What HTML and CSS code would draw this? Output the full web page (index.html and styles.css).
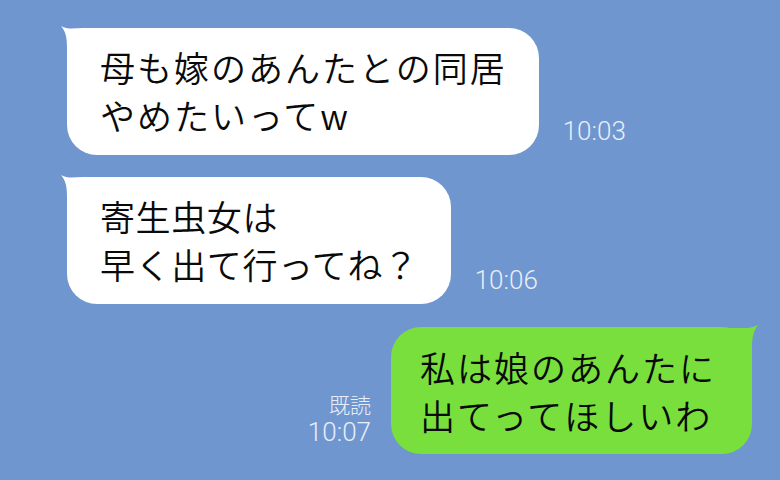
FILE: index.html
```html
<!DOCTYPE html>
<html lang="ja">
<head>
    <meta charset="UTF-8">
    <title>トーク</title>
    <meta name="viewport" content="width=device-width, initial-scale=1.0">
    <link rel="stylesheet" href="styles.css">
</head>
<body>
    <div class="chat">
        <div class="row row-in">
            <div class="bubble bubble-in">
                <svg class="tail tail-in" width="40" height="40" viewBox="0 0 40 40"><path d="M2 2 C7 8 8 14 8 24 L8 40 L40 40 L40 4 L24 4 C16 4 9 6 2 2 Z"/></svg>
                <p class="msg">母も嫁のあんたとの同居<br>やめたいってw</p>
            </div>
            <div class="meta meta-in">
                <span class="time">10:03</span>
            </div>
        </div>

        <div class="row row-in">
            <div class="bubble bubble-in">
                <svg class="tail tail-in" width="40" height="40" viewBox="0 0 40 40"><path d="M2 2 C7 8 8 14 8 24 L8 40 L40 40 L40 4 L24 4 C16 4 9 6 2 2 Z"/></svg>
                <p class="msg msg-tight">寄生虫女は<br>早く出て行ってね？</p>
            </div>
            <div class="meta meta-in">
                <span class="time">10:06</span>
            </div>
        </div>

        <div class="row row-out">
            <div class="meta meta-out">
                <span class="read">既読</span>
                <span class="time">10:07</span>
            </div>
            <div class="bubble bubble-out">
                <svg class="tail tail-out" width="40" height="40" viewBox="0 0 40 40"><path d="M38 1 C33 8 32 14 32 24 L32 40 L0 40 L0 4 L16 4 C24 4 31 5 38 1 Z"/></svg>
                <p class="msg">私は娘のあんたに<br>出てってほしいわ</p>
            </div>
        </div>
    </div>
</body>
</html>
```

FILE: styles.css
```css
body {
    margin: 0;
    padding: 0;
    width: 780px;
    height: 480px;
    overflow: hidden;
    background: #6f96cf;
    font-family: 'Noto Sans CJK JP', 'Noto Sans', sans-serif;
}
.chat {
    display: flex;
    flex-direction: column;
    gap: 22px;
    padding: 28px 28px 0 67px;
}
.row {
    display: flex;
    align-items: flex-end;
}
.row-out {
    justify-content: flex-end;
    margin-top: 1px;
}
.bubble {
    position: relative;
    border-radius: 30px;
    padding: 15px 32px 16px 33px;
}
.bubble-in {
    background: #fff;
}
.bubble-out {
    background: #79df3c;
    padding: 16px 36px 15px 29px;
}
.tail {
    position: absolute;
    top: -4px;
}
.tail-in {
    left: -8px;
    fill: #fff;
}
.tail-out {
    right: -8px;
    top: -3px;
    fill: #79df3c;
}
.msg {
    position: relative;
    margin: 0;
    font-size: 35px;
    font-weight: 350;
    line-height: 48px;
    letter-spacing: 2px;
    color: #0a0a0a;
    white-space: nowrap;
}
.msg-tight {
    letter-spacing: 0.6px;
}
.meta {
    display: flex;
    flex-direction: column;
    color: #e8eef8;
    margin-bottom: 9px;
}
.meta-in {
    margin-left: 24px;
}
.meta-out {
    align-items: flex-end;
    margin-right: 20px;
    margin-bottom: 7px;
}
.time {
    font-family: Roboto, 'Liberation Sans', sans-serif;
    font-weight: 300;
    font-size: 26px;
    line-height: 30px;
}
.read {
    font-family: 'Noto Sans CJK JP', sans-serif;
    font-weight: 300;
    font-size: 21px;
    line-height: 26px;
}
```
